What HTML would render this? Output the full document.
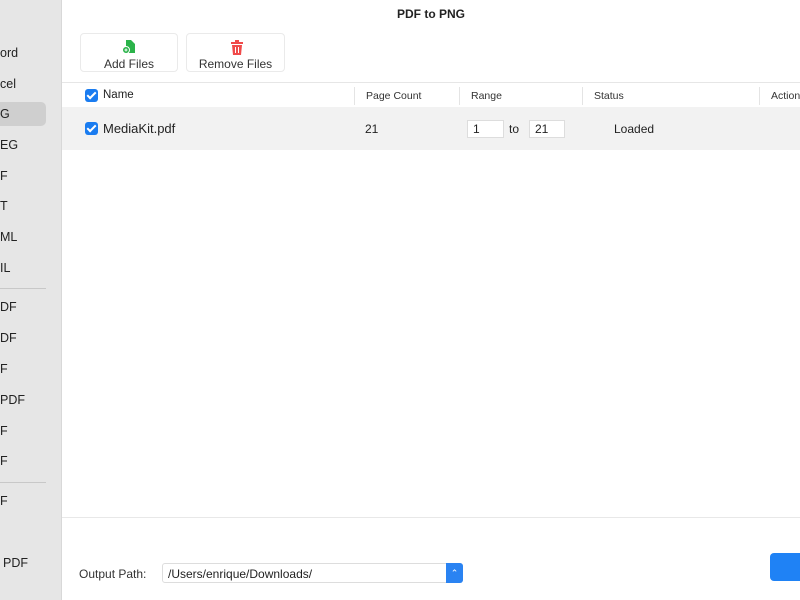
<!DOCTYPE html>
<html><head><style>
*{margin:0;padding:0;box-sizing:border-box}
body{width:800px;height:600px;overflow:hidden;background:#fff;font-family:"Liberation Sans",sans-serif;color:#222;position:relative}
.sb{position:absolute;left:0;top:0;width:62px;height:600px;background:#e6e6e6;border-right:1px solid #d8d8d8}
.si{position:absolute;left:0;font-size:12.5px;color:#222}
.sel{position:absolute;left:0;top:102px;width:46px;height:24px;background:#cfcfcf;border-radius:0 5px 5px 0}
.div{position:absolute;left:0;width:46px;height:1px;background:#c8c8c8}
.abs{position:absolute}
.btn{position:absolute;top:33px;height:39px;border:1px solid #eaeaea;border-radius:4px;background:#fff;font-size:12px;text-align:center;color:#333}
.cb{position:absolute;width:13px;height:13px;background:#1a7cf0;border-radius:3px}
.cb:after{content:"";position:absolute;left:4px;top:1px;width:3px;height:7px;border:solid #fff;border-width:0 2px 2px 0;transform:rotate(45deg)}
.hd{position:absolute;top:90px;font-size:10.5px;color:#333}
.sep{position:absolute;top:87px;width:1px;height:18px;background:#e4e4e4}
.inp{position:absolute;top:120px;height:18px;border:1px solid #ddd;background:#fff;font-size:12px;padding:1px 5px}
</style></head><body>
<div class="sb">
<div class="sel"></div>
<div class="si" style="top:46px">ord</div>
<div class="si" style="top:77px">cel</div>
<div class="si" style="top:107px">G</div>
<div class="si" style="top:138px">EG</div>
<div class="si" style="top:169px">F</div>
<div class="si" style="top:199px">T</div>
<div class="si" style="top:230px">ML</div>
<div class="si" style="top:261px">IL</div>
<div class="div" style="top:288px"></div>
<div class="si" style="top:300px">DF</div>
<div class="si" style="top:331px">DF</div>
<div class="si" style="top:362px">F</div>
<div class="si" style="top:393px">PDF</div>
<div class="si" style="top:424px">F</div>
<div class="si" style="top:454px">F</div>
<div class="div" style="top:482px"></div>
<div class="si" style="top:494px">F</div>
<div class="si" style="top:556px;left:3px">PDF</div>
</div>
<div class="abs" style="left:62px;top:7px;width:738px;text-align:center;font-size:12px;font-weight:bold">PDF to PNG</div>
<div class="btn" style="left:80px;width:98px">
<svg class="abs" style="left:40px;top:5px" width="16" height="16" viewBox="0 0 16 16"><path d="M5 1h5l4 4v9H5z" fill="#2bb34a"/><circle cx="5" cy="11" r="3.5" fill="#2bb34a" stroke="#fff" stroke-width="1"/><path d="M3.5 11h3M5 9.5v3" stroke="#fff" stroke-width="1"/></svg>
<div class="abs" style="top:23px;width:100%">Add Files</div></div>
<div class="btn" style="left:186px;width:99px">
<svg class="abs" style="left:43px;top:6px" width="14" height="15" viewBox="0 0 14 15"><rect x="1" y="2" width="12" height="2" fill="#f04a4a"/><rect x="5" y="0" width="4" height="2" fill="#f04a4a"/><path d="M2 5h10l-1 10H3z" fill="#f04a4a"/><path d="M5.5 7v6M8.5 7v6" stroke="#fff" stroke-width="1"/></svg>
<div class="abs" style="top:23px;width:100%">Remove Files</div></div>
<div class="abs" style="left:62px;top:82px;width:738px;height:1px;background:#e6e6e6"></div>
<div class="cb" style="left:85px;top:89px"></div>
<div class="abs" style="left:103px;top:89px;font-size:11.5px">Name</div>
<div class="sep" style="left:354px"></div><div class="sep" style="left:459px"></div><div class="sep" style="left:582px"></div><div class="sep" style="left:759px"></div>
<div class="hd" style="left:366px">Page Count</div>
<div class="hd" style="left:471px">Range</div>
<div class="hd" style="left:594px">Status</div>
<div class="hd" style="left:771px">Action</div>
<div class="abs" style="left:62px;top:107px;width:738px;height:43px;background:#f2f2f2"></div>
<div class="cb" style="left:85px;top:122px"></div>
<div class="abs" style="left:103px;top:121px;font-size:13px">MediaKit.pdf</div>
<div class="abs" style="left:365px;top:122px;font-size:12px">21</div>
<div class="inp" style="left:467px;width:37px">1</div>
<div class="abs" style="left:509px;top:122px;font-size:12px">to</div>
<div class="inp" style="left:529px;width:36px">21</div>
<div class="abs" style="left:614px;top:122px;font-size:12px">Loaded</div>
<div class="abs" style="left:62px;top:517px;width:738px;height:1px;background:#e8e8e8"></div>
<div class="abs" style="left:79px;top:567px;font-size:12px;color:#333">Output Path:</div>
<div class="abs" style="left:162px;top:563px;width:301px;height:20px;border:1px solid #ddd;border-radius:3px;background:#fff;font-size:12px;padding:3px 5px">/Users/enrique/Downloads/</div>
<div class="abs" style="left:446px;top:563px;width:17px;height:20px;background:#2a83f2;border-radius:0 3px 3px 0;color:#fff;font-size:9px;text-align:center;line-height:20px">⌃</div>
<div class="abs" style="left:770px;top:553px;width:40px;height:28px;background:#1f82f5;border-radius:4px"></div>
</body></html>
